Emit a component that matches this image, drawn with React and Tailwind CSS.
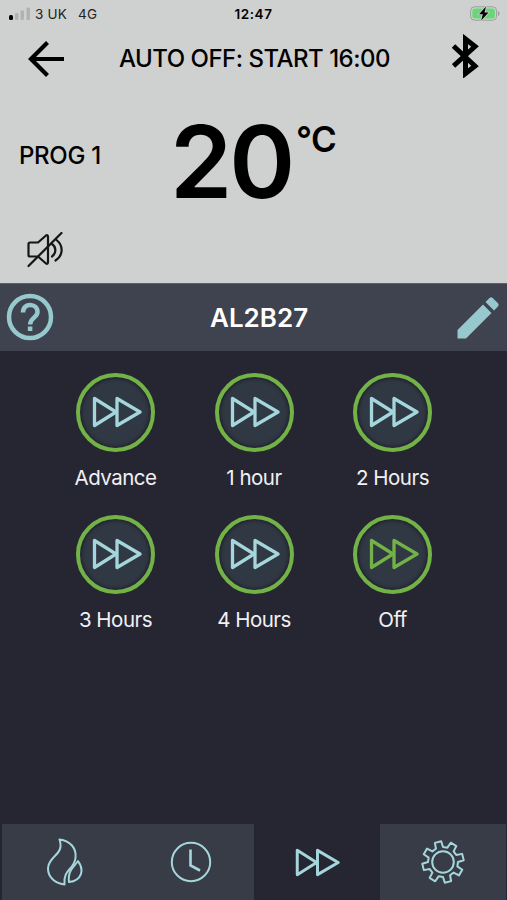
// App.jsx
const timers = [
  { label: "Advance" },
  { label: "1 hour" },
  { label: "2 Hours" },
  { label: "3 Hours" },
  { label: "4 Hours" },
  { label: "Off", off: true },
];

// eight teeth, each one given as [radius, degrees from the tooth centre]
const tooth = [
  [15, -14],
  [20.8, -9],
  [20.8, 9],
  [15, 14],
];

const gearPoints = Array.from({ length: 8 }, (_, i) =>
  tooth.map(([r, deg]) => {
    const a = ((i * 45 - 14 + deg) * Math.PI) / 180;
    return `${(22 + r * Math.sin(a)).toFixed(2)},${(22 - r * Math.cos(a)).toFixed(2)}`;
  })
)
  .flat()
  .join(" ");

const FastForward = ({ className }) => (
  <svg
    viewBox="0 0 50 32"
    fill="none"
    stroke="currentColor"
    strokeWidth="3.3"
    strokeLinejoin="round"
    className={className}
  >
    <path d="M2.500 2.500v27L24 16z" />
    <path d="M25 2.500v27L48 16z" />
  </svg>
);

const StatusBar = () => (
  <div className="grid h-7 grid-cols-3 items-center text-[13.500px] leading-none">
    <div className="flex items-center pl-[9px]">
      <svg width="22" height="14" viewBox="0 0 22 14" className="shrink-0">
        <rect x="0" y="8" width="4" height="5" rx="1.5" />
        <g fill="#b0b3b2">
          <rect x="6" y="6" width="3.5" height="7" rx="1" />
          <rect x="11.500" y="3.500" width="3.500" height="9.500" rx="1" />
          <rect x="17.500" y="0.500" width="3.500" height="12.500" rx="1" />
        </g>
      </svg>
      <span className="ml-[4px] pt-px tracking-[0.2px] text-[#222]">3 UK</span>
      <span className="ml-[11px] pt-px tracking-[0.2px] text-[#222]">4G</span>
    </div>
    <div className="pt-px text-center font-semibold tracking-[0.6px]">12:47</div>
    <div className="flex justify-end pr-[6px]">
      <svg width="31" height="16" viewBox="0 0 31 16">
        <rect x="0.600" y="0.800" width="26" height="13.400" rx="4" fill="none" stroke="#9b9e9c" />
        <rect x="2.300" y="2.500" width="22.600" height="10" rx="2.500" fill="#68d777" />
        <path d="M28 5c2 .8 2 4.200 0 5z" fill="#9b9e9c" />
        <path
          d="M16 .5 9 8.200h3.800L11.200 14.500 18.500 6.500h-4z"
          stroke="#cfd1d0"
          strokeWidth="1.500"
          paintOrder="stroke"
        />
      </svg>
    </div>
  </div>
);

const Readout = () => (
  <header className="h-[283px] bg-[#cfd1d0] text-black">
    <StatusBar />

    <div className="grid h-[62px] grid-cols-[92px_1fr_55px] items-center pl-[27px]">
      <svg width="38" height="38" viewBox="0 0 38 38" fill="none" stroke="currentColor" strokeWidth="4.200">
        <path d="M37 19H4M20.500 2.500 4 19l16.500 16.500" />
      </svg>
      <h1 className="text-[24px] leading-none font-medium tracking-[-0.5px] whitespace-nowrap">
        AUTO OFF: START 16:00
      </h1>
      <svg width="28" height="44" viewBox="0 0 28 44" fill="none" stroke="currentColor" strokeWidth="5" className="mb-[7px]">
        <path d="m1.500 12 21.500 20-9.500 7.500V5l9.500 7.500-21.500 19.500" />
      </svg>
    </div>

    <div className="flex h-[142px] pl-[19px]">
      <p className="w-[151px] shrink-0 pt-[54px] text-[24px] leading-none font-medium tracking-[-0.3px]">
        PROG 1
      </p>
      <p className="w-[126px] pt-[22px] text-[100px] leading-none font-semibold tracking-[-3px]">20</p>
      <p className="pt-[32px] text-[35px] leading-none font-semibold tracking-[-0.5px]">°C</p>
    </div>

    <svg
      width="36"
      height="36"
      viewBox="0 0 36 36"
      fill="none"
      stroke="#151515"
      strokeWidth="2.200"
      strokeLinecap="round"
      strokeLinejoin="round"
      className="ml-[27px]"
    >
      <path d="M3 10.500h8l8-7q2-1 2 1.500v25q0 2.500-2 1.500l-8-7H3q-1.500 0-1.500-1.500V12Q1.500 10.500 3 10.500z" />
      <path d="M25 12c4.500 3 4.500 9.500 0 12.500M29.500 8c7 5.500 7 15.500-1 20.500" />
      <path d="M1.500 34 34.500 1" />
    </svg>
  </header>
);

const DeviceBar = () => (
  <div className="grid h-[68px] grid-cols-[204px_1fr_50px] items-center border-t border-[#5c6069] bg-[#3f434f] pb-px pl-[6px]">
    <svg width="48" height="48" viewBox="0 0 48 48" fill="none" stroke="#97c8cd" strokeWidth="4.500">
      <circle cx="24" cy="24" r="21" />
      <path d="M17 19.500c0-10.500 14.500-9.500 14.500-.5 0 5.500-7.400 6-7.400 12.500M24.100 33.500v4.500" />
    </svg>
    <h2 className="pt-[2px] text-[26px] leading-none font-semibold tracking-[0px] text-white">AL2B27</h2>
    <svg width="43" height="43" viewBox="0 0 43 43" fill="#97c8cd">
      <path d="M.5 34 26 8.500l8.500 8.500L9 42.500H.5zM28.500 6l4-4q1.500-1.500 3.200 0l5.300 5.300q1.500 1.500 0 3.200l-4 4z" />
    </svg>
  </div>
);

const TimerButton = ({ label, off }) => (
  <button className="flex flex-col items-center">
    <span className="flex size-[79px] items-center justify-center rounded-full border-[4px] border-[#73b246] bg-[#303844] pb-px pl-[2px] shadow-[inset_0_0_3px_2px_#242630]">
      <FastForward
        className={off ? "h-8 w-[50px] text-[#73b246]" : "h-8 w-[50px] text-[#a5d6dc]"}
      />
    </span>
    <span className="mt-[15px] text-[20.500px] leading-[22px] tracking-[-0.5px] whitespace-nowrap text-[#f1f1f4]">
      {label}
    </span>
  </button>
);

const TabBar = () => (
  <nav className="grid h-[76px] grid-cols-4 pr-px pl-[2px] text-[#a5d6dc]">
    <button className="flex items-center justify-center bg-[#373c47]">
      <svg
        width="38"
        height="48"
        viewBox="0 0 38 48"
        fill="none"
        stroke="currentColor"
        strokeWidth="2"
        strokeLinejoin="round"
      >
        <path d="M13.500 1.500C25 3 30.500 10.500 29.500 20 28 32 17 31 18.500 46.500 8 45 2 38.500 2 30.500 2 18 19 17 13.500 1.500z" />
        <path d="M32 23c6.500 9 4 19.500-9 21-1.500-11 4-14 9-21z" />
      </svg>
    </button>
    <button className="flex items-center justify-center bg-[#373c47]">
      <svg width="42" height="42" viewBox="0 0 42 42" fill="none" stroke="currentColor" strokeWidth="2">
        <circle cx="21" cy="21" r="19.200" />
        <path d="M20.500 8.500V24.500l9.500 5" strokeWidth="2.600" />
      </svg>
    </button>
    <button className="flex items-center justify-center">
      <FastForward className="h-[29px] w-[45px]" />
    </button>
    <button className="flex items-center justify-center bg-[#373c47]">
      <svg
        width="44"
        height="44"
        viewBox="0 0 44 44"
        fill="none"
        stroke="currentColor"
        strokeWidth="2"
        strokeLinejoin="round"
      >
        <polygon points={gearPoints} />
        <circle cx="22" cy="22" r="10.800" />
      </svg>
    </button>
  </nav>
);

export default function App() {
  return (
    <div className="flex h-[900px] w-[507px] flex-col overflow-hidden bg-[#262632] font-['Inter',sans-serif]">
      <Readout />
      <DeviceBar />
      <main className="grid flex-1 grid-cols-[138.5px_138.5px_138.5px] content-start justify-center gap-y-[26px] pt-[22px] pl-px">
        {timers.map((t) => (
          <TimerButton key={t.label} {...t} />
        ))}
      </main>
      <TabBar />
    </div>
  );
}
